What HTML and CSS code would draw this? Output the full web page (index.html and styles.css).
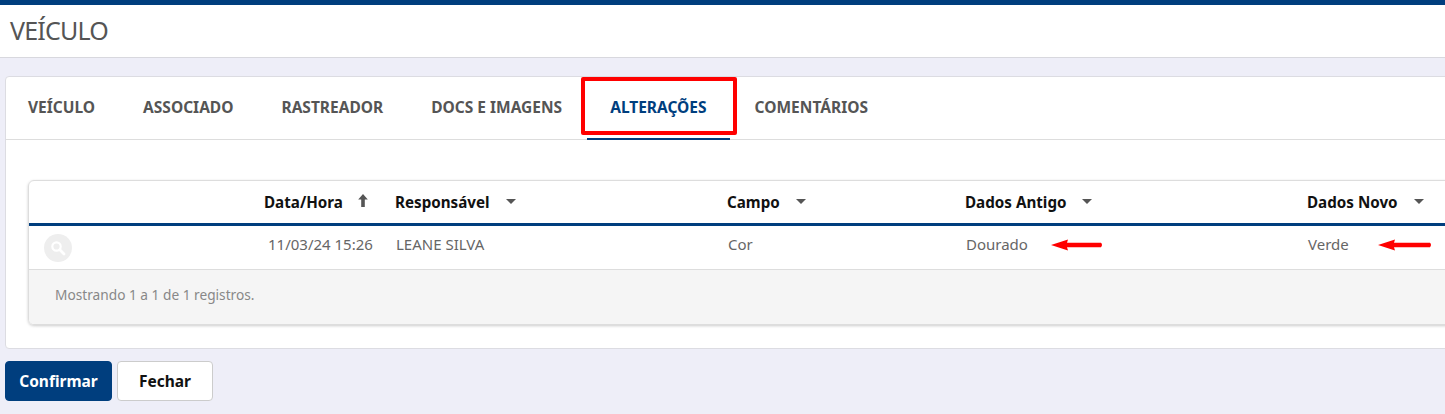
FILE: index.html
```html
<!DOCTYPE html>
<html lang="pt-BR">
<head>
    <meta charset="UTF-8">
    <title>Veículo</title>
    <link rel="stylesheet" href="styles.css">
</head>
<body>
    <header class="page-header">
        <h1 class="page-title">VEÍCULO</h1>
    </header>

    <main class="content">
        <section class="card">
            <nav class="tabs">
                <a href="#" class="tab">VEÍCULO</a>
                <a href="#" class="tab">ASSOCIADO</a>
                <a href="#" class="tab">RASTREADOR</a>
                <a href="#" class="tab">DOCS E IMAGENS</a>
                <a href="#" class="tab tab-active">ALTERAÇÕES</a>
                <a href="#" class="tab">COMENTÁRIOS</a>
                <span class="mark-box"></span>
            </nav>

            <div class="card-body">
                <div class="grid-box">
                    <div class="grid-row grid-head">
                        <div></div>
                        <div class="col-head">Data/Hora
                            <svg class="sort-up" width="10" height="14" viewBox="0 0 10 14"><path d="M5 0 L9.8 5.5 L6.8 5.5 L6.8 13 L3.2 13 L3.2 5.5 L0.2 5.5 Z" fill="#555"/></svg>
                        </div>
                        <div class="col-head">Responsável <span class="caret"></span></div>
                        <div class="col-head">Campo <span class="caret"></span></div>
                        <div class="col-head">Dados Antigo <span class="caret"></span></div>
                        <div class="col-head">Dados Novo <span class="caret"></span></div>
                    </div>
                    <div class="grid-row grid-line">
                        <div class="cell-icon">
                            <span class="search-btn">
                                <svg width="16" height="16" viewBox="0 0 16 16"><circle cx="6.5" cy="6.5" r="4.2" fill="none" stroke="#fff" stroke-width="2.2"/><path d="M9.8 9.8 L14 14" stroke="#fff" stroke-width="2.8" stroke-linecap="round"/></svg>
                            </span>
                        </div>
                        <div class="cell cell-date">11/03/24 15:26</div>
                        <div class="cell">LEANE SILVA</div>
                        <div class="cell">Cor</div>
                        <div class="cell">Dourado
                            <svg class="arrow" width="52" height="12" viewBox="0 0 52 12"><path d="M0 6 L17 0.5 L16 3.8 L50 3.8 Q52 6 50 8.2 L16 8.2 L17 11.5 Z" fill="#f00"/></svg>
                        </div>
                        <div class="cell">Verde
                            <svg class="arrow arrow-new" width="54" height="12" viewBox="0 0 54 12"><path d="M0 6 L17 0.5 L16 3.8 L52 3.8 Q54 6 52 8.2 L16 8.2 L17 11.5 Z" fill="#f00"/></svg>
                        </div>
                    </div>
                    <div class="grid-foot">Mostrando 1 a 1 de 1 registros.</div>
                </div>
            </div>
        </section>

        <div class="actions">
            <button class="btn btn-primary">Confirmar</button>
            <button class="btn btn-default">Fechar</button>
        </div>
    </main>
</body>
</html>
```

FILE: styles.css
```css
* {
    margin: 0;
    padding: 0;
    box-sizing: border-box;
}

html, body {
    height: 100%;
    overflow: hidden;
}

body {
    font-family: "Noto Sans", Arial, sans-serif;
    background: #eeeef8;
    color: #555;
    width: 1445px;
}

.page-header {
    height: 58px;
    background: #fff;
    border-top: 5px solid #003e7e;
    border-bottom: 1px solid #d8d8de;
    padding: 0 0 2px 10px;
    display: flex;
    align-items: center;
}

.page-title {
    font-size: 25px;
    font-weight: 400;
    color: #555;
    letter-spacing: -0.8px;
}

.content {
    padding: 18px 0 0 5px;
}

.card {
    width: 1460px;
    height: 273px;
    background: #fff;
    border: 1px solid #dcdce2;
    border-radius: 4px;
}

.tabs {
    position: relative;
    display: flex;
    height: 63px;
    padding-left: 22px;
    border-bottom: 1px solid #ddd;
}

.tab {
    display: flex;
    align-items: center;
    height: 62px;
    padding-bottom: 3px;
    margin-right: 48px;
    font-size: 15.5px;
    font-weight: 700;
    color: #555;
    text-decoration: none;
}

.tab-active {
    position: relative;
    color: #003e7e;
    height: 63px;
    padding-bottom: 4px;
}

.tab-active::after {
    content: "";
    position: absolute;
    left: -23px;
    right: -23px;
    bottom: 0;
    height: 2px;
    background: #003e7e;
}

/* red box drawn over the active tab */
.mark-box {
    position: absolute;
    left: 575px;
    top: 0;
    width: 156px;
    height: 58px;
    border: 4px solid #f00;
    border-radius: 2px;
}

.card-body {
    padding: 40px 0 0 22px;
}

.grid-box {
    width: 1440px;
    height: 145px;
    border: 1px solid #ddd;
    border-radius: 6px;
    box-shadow: 0 1px 3px rgba(0,0,0,0.2);
    overflow: hidden;
}

.grid-row {
    display: grid;
    grid-template-columns: 235px 131px 332px 238px 342px 1fr;
}

.grid-head {
    height: 45px;
    border-bottom: 3px solid #003e7e;
    align-items: center;
}

.col-head {
    font-size: 15.2px;
    font-weight: 700;
    color: #111;
}

.caret {
    display: inline-block;
    width: 0;
    height: 0;
    margin-left: 12px;
    vertical-align: 4px;
    border-left: 5px solid transparent;
    border-right: 5px solid transparent;
    border-top: 5px solid #555;
}

.sort-up {
    margin-left: 11px;
}

.grid-line {
    height: 44px;
    border-bottom: 1px solid #ddd;
    align-items: center;
}

.cell-icon {
    padding-left: 15px;
}

.search-btn {
    display: flex;
    align-items: center;
    justify-content: center;
    width: 28px;
    height: 28px;
    border-radius: 50%;
    background: #eee;
}

.cell {
    position: relative;
    font-size: 15px;
    color: #666;
    padding: 0 0 7px 1px;
}

.cell-date {
    padding-left: 4px;
}

.arrow {
    position: absolute;
    left: 86px;
    top: 5px;
}

.arrow-new {
    left: 71px;
}

.grid-foot {
    height: 55px;
    background: #f5f5f5;
    padding: 15px 0 0 26px;
    font-size: 13.7px;
    color: #888;
}

.actions {
    display: flex;
    gap: 5px;
    margin-top: 12px;
}

.btn {
    height: 40px;
    font-family: inherit;
    font-size: 15.5px;
    font-weight: 700;
    border-radius: 4px;
}

.btn-primary {
    width: 107px;
    color: #fff;
    background: #003e7e;
    border: 1px solid #003e7e;
}

.btn-default {
    width: 96px;
    color: #111;
    background: #fff;
    border: 1px solid #ccc;
}
```
